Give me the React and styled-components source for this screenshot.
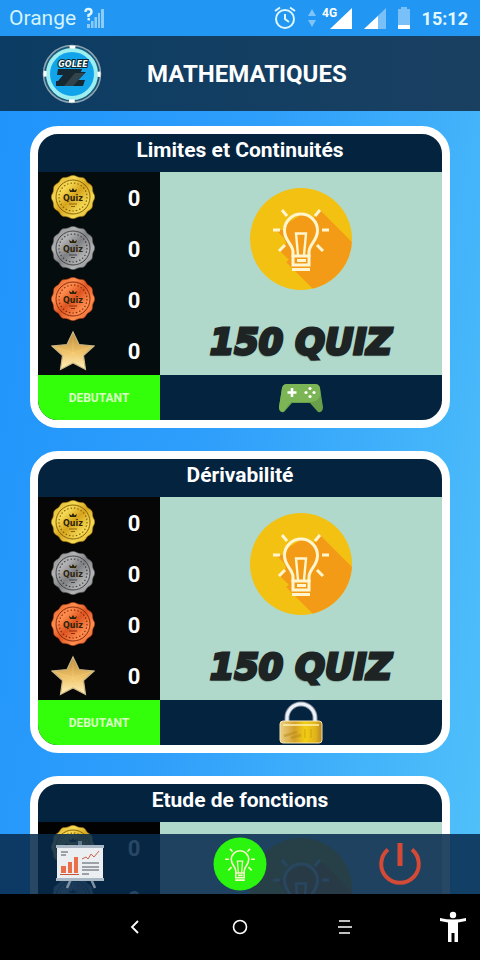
import React from 'react';
import styled, { createGlobalStyle } from 'styled-components'

const GlobalStyle = createGlobalStyle`
  * {
    box-sizing: border-box;
  }

  body {
    margin: 0;
    font-family: Roboto, "Liberation Sans", sans-serif;
    color: #ffffff;
    background: #000000;
  }

  button {
    border: none;
    padding: 0;
    background: none;
    font: inherit;
    color: inherit;
    cursor: pointer;
  }

  h1, h2, p, ul {
    margin: 0;
    padding: 0;
  }

  svg {
    display: block;
  }
`;

const Main = styled.div`
  height: 100vh;
  display: flex;
  flex-direction: column;
  background: linear-gradient(100deg, #1e93fb 0%, #2f9ffb 45%, #52c2fa 100%);
`;

const StatusBar = styled.div`
  height: 36px;
  flex: none;
  display: flex;
  align-items: center;
  justify-content: space-between;
  padding: 0 12px 0 9px;
  background: #2196f3;
`;

const StatusGroup = styled.div`
  display: flex;
  align-items: center;
  gap: ${props => props.$gap};
`;

const Carrier = styled.span`
  font-size: 21px;
  line-height: 36px;
  color: #d3f3ff;
`;

const Clock = styled.span`
  font-size: 18px;
  font-weight: 700;
  color: #e2f8ff;
`;

const Header = styled.header`
  height: 75px;
  flex: none;
  display: grid;
  grid-template-columns: 147px 1fr;
  align-items: center;
  background: linear-gradient(90deg, #0c3c63, #1a4061);

  svg {
    margin-left: 42px;
  }

  h1 {
    font-size: 24px;
    line-height: 32px;
    font-weight: 700;
  }
`;

const Content = styled.div`
  position: relative;
  flex: 1;
  min-height: 0;
`;

const List = styled.main`
  height: 100%;
  overflow-y: auto;
  scrollbar-width: none;
  display: flex;
  flex-direction: column;
  gap: 23px;
  padding: 15px 30px 76px;
`;

const Card = styled.section`
  flex: none;
  border: 8px solid #ffffff;
  border-radius: 28px;
  overflow: hidden;
  background: #03233f;

  h2 {
    height: 38px;
    font-size: 21px;
    line-height: 32px;
    font-weight: 700;
    text-align: center;
  }
`;

const CardBody = styled.div`
  height: 203px;
  display: grid;
  grid-template-columns: 122px 1fr;
`;

const Scores = styled.ul`
  list-style: none;
  display: flex;
  flex-direction: column;
  background: ${props => props.$background};
`;

const Score = styled.li`
  flex: 1;
  display: grid;
  grid-template-columns: 70px 52px;
  align-items: center;
  justify-items: center;
  font-size: 22px;
  line-height: 24px;
  font-weight: 700;

  span {
    padding-top: 4px;
  }
`;

const Preview = styled.div`
  display: flex;
  flex-direction: column;
  align-items: center;
  gap: 30px;
  padding-top: 16px;
  background: #b0d9cc;
`;

const QuizCount = styled.p`
  font-family: "DejaVu Sans", sans-serif;
  font-size: 35px;
  line-height: 44px;
  font-weight: 700;
  font-style: italic;
  white-space: nowrap;
  color: #1d2423;
  -webkit-text-stroke: 3px #1d2423;
  text-shadow: -1px 2px 1px #5e7a72;
`;

const CardFooter = styled.div`
  height: 45px;
  display: grid;
  grid-template-columns: 122px 1fr;
`;

const Level = styled.button`
  && {
    background: #33ff0a;
    color: #d9ffc4;
    font-size: 12px;
    font-weight: 700;
  }
`;

const PlayButton = styled.button`
  display: flex;
  align-items: center;
  justify-content: center;
`;

const TabBar = styled.nav`
  position: absolute;
  left: 0;
  right: 0;
  bottom: 0;
  height: 60px;
  display: grid;
  grid-template-columns: repeat(3, 1fr);
  background: rgba(8, 44, 78, 0.87);

  button {
    display: flex;
    align-items: center;
    justify-content: center;
  }
`;

const SystemNav = styled.nav`
  height: 66px;
  flex: none;
  display: grid;
  grid-template-columns: 1fr repeat(3, 105px) 1fr;
  background: #000000;

  button {
    display: flex;
    align-items: center;
    justify-content: center;
  }

  button:first-child {
    grid-column: 2;
  }

  button:last-child {
    justify-content: flex-end;
    padding-right: 13px;
  }
`;

const medals = {
  gold: ['#f5da55', '#d6a41c', '#8a6208'],
  silver: ['#b4b4b6', '#7f8083', '#434447'],
  bronze: ['#ff8e50', '#dd5420', '#8a2c0a'],
};

// scalloped edge of a medal, 12 bumps round a 44px square
const medalEdge = (() => {
  let d = '';
  for (let i = 0; i < 96; i++) {
    const a = (i / 96) * Math.PI * 2;
    const r = 21.2 + Math.cos(a * 12) * 0.6;
    d += `${i ? 'L' : 'M'}${(22 + r * Math.cos(a)).toFixed(2)} ${(22 + r * Math.sin(a)).toFixed(2)}`;
  }
  return d + 'Z';
})();

function Medal({ kind }) {
  const [light, mid, dark] = medals[kind];
  return (
    <svg width='44' height='44' viewBox='0 0 44 44'>
      <defs>
        <linearGradient id={`medal-${kind}`} x1='0' y1='0' x2='1' y2='1'>
          <stop offset='0' stopColor={mid} />
          <stop offset='0.3' stopColor={light} />
          <stop offset='0.5' stopColor={mid} />
          <stop offset='0.72' stopColor={light} />
          <stop offset='1' stopColor={mid} />
        </linearGradient>
      </defs>
      <path d={medalEdge} fill={`url(#medal-${kind})`} stroke={dark} strokeWidth='0.6' />
      <circle cx='22' cy='22' r='17' fill='none' stroke={dark} strokeWidth='1' />
      <circle cx='22' cy='22' r='14' fill='none' stroke={dark} strokeWidth='1.2' strokeDasharray='1.5 2' />
      <path d='M19 17l-1-3 2.5 1.500L22 13l1.500 2.500L26 14l-1 3z' fill='#2e2408' />
      <path d='M18 29h8M20 31.500h4' stroke={dark} strokeWidth='1.200' />
      <text x='22' y='25.500' textAnchor='middle' fontSize='8' fontWeight='700' fontFamily='"DejaVu Sans", sans-serif' fill='#2e2408'>Quiz</text>
    </svg>
  );
}

function Star() {
  return (
    <svg width='44' height='44' viewBox='0 0 44 44'>
      <defs>
        <linearGradient id='star' x1='0' y1='0' x2='0' y2='1'>
          <stop offset='0' stopColor='#b98737' />
          <stop offset='0.55' stopColor='#f0c46a' />
          <stop offset='1' stopColor='#fff0bd' />
        </linearGradient>
      </defs>
      <path d='M22 4L28 16.500L43 18L32.500 27.500 34.500 41.500 22 35 9.500 41.500 11.500 27.500 1 18L16 16.500Z' fill='url(#star)' stroke='#c9b584' strokeWidth='1.200' />
      <path d='M22 4V25M43 18L22 25M34.500 41L22 25M9.500 41L22 25M1 18L22 25' stroke='#fbe2a0' strokeWidth='0.5' opacity='0.5' />
    </svg>
  );
}

function BulbLines() {
  return (
    <g fill='none' stroke='#fff6cf' strokeWidth='3'>
      <path d='M43 69V64C43 56 34.500 53 34.500 42.500A16.500 16.500 0 0 1 67.500 42.500C67.500 53 59 56 59 64V69' />
      <path d='M43 68H59V77H43ZM47 72.500H56M42 81.500H60' />
      <path d='M48 67L46 45.500H56L54 67M45 45.500H57' strokeWidth='2.400' />
      <path d='M32 22L37 28M70 22L65 28M23 42H30M79 42H72M29 63L35 57M73 63L67 57' />
    </g>
  );
}

function BulbBadge() {
  return (
    <svg width='102' height='102' viewBox='0 0 102 102'>
      <defs>
        <clipPath id='badge'><circle cx='51' cy='51' r='51' /></clipPath>
      </defs>
      <circle cx='51' cy='51' r='51' fill='#f2c112' />
      <path d='M70 22L112 64V112H74L36 74 42 70 35 52 36 36 51 27 64 30Z' fill='#f39b16' clipPath='url(#badge)' />
      <path d='M26 42L34 50 36 55 30 63 43 76V64L34 46V42Z' fill='#f39b16' />
      <BulbLines />
    </svg>
  );
}

function Gamepad() {
  return (
    <svg width='46' height='32' viewBox='0 0 46 32'>
      <path d='M9 2H37Q41 2 42 6L45 25Q45 31 40 30L32 21H14L6 30Q1 31 1 25L4 6Q5 2 9 2Z' fill='#689f48' />
      <path d='M9 2H37Q41 2 42 6L42.500 13Q40 20 33 20H13L5 30Q1 30 1 25L4 6Q5 2 9 2Z' fill='#7cb555' />
      <path d='M14 6V15M9.500 10.500H18.500' stroke='#ffffff' strokeWidth='2.600' />
      <g fill='#ffffff'>
        <circle cx='32' cy='6.500' r='1.600' />
        <circle cx='32' cy='14.500' r='1.600' />
        <circle cx='28' cy='10.500' r='1.600' />
        <circle cx='36' cy='10.500' r='1.600' />
      </g>
    </svg>
  );
}

function Padlock() {
  return (
    <svg width='44' height='44' viewBox='0 0 44 44'>
      <defs>
        <linearGradient id='lock' x1='0' y1='0' x2='1' y2='0'>
          <stop offset='0' stopColor='#e9cf86' />
          <stop offset='0.35' stopColor='#d3a02a' />
          <stop offset='0.6' stopColor='#f3cf12' />
          <stop offset='0.85' stopColor='#e0b31c' />
          <stop offset='1' stopColor='#b68727' />
        </linearGradient>
      </defs>
      <path d='M8 23V17A14 14 0 0 1 36 17V23' fill='none' stroke='#8b93a0' strokeWidth='5' />
      <path d='M8 23V17A14 14 0 0 1 36 17V23' fill='none' stroke='#eef3fa' strokeWidth='3' />
      <rect x='1' y='20' width='42' height='22' rx='3' fill='url(#lock)' stroke='#f4e3b0' />
      <path d='M4 24H40' stroke='#fff0b0' strokeWidth='1.500' />
      <path d='M5 35L18 31M12 37L22 34' stroke='#b98a18' strokeWidth='2.500' opacity='0.5' />
      <path d='M26 28V37M32 28V37' stroke='#c99a10' strokeWidth='2' opacity='0.4' />
    </svg>
  );
}

function Logo() {
  return (
    <svg width='60' height='60' viewBox='0 0 60 60'>
      <circle cx='30' cy='30' r='28.500' fill='#1b5a78' stroke='#8fa5b3' strokeWidth='1.500' />
      <circle cx='30' cy='30' r='24' fill='#12a4ea' stroke='#9deef0' strokeWidth='4' />
      <circle cx='30' cy='30' r='27' fill='none' stroke='#ffffff' strokeWidth='3' strokeDasharray='6 36.410' strokeDashoffset='3' />
      <text x='31' y='23' textAnchor='middle' fontSize='8' fontWeight='700' fontStyle='italic' fill='#f4ffff' stroke='#0a2530' strokeWidth='2' paintOrder='stroke' fontFamily='"DejaVu Sans", sans-serif'>GOLEE</text>
      <path d='M16 25H40L39 28H44L36 36H43L41 42H14V37H16L21 31H15Z' fill='#162832' />
      <path d='M33 29H43L31 42H22Z' fill='#33434b' />
    </svg>
  );
}

function ChartBoard() {
  return (
    <svg width='50' height='50' viewBox='0 0 50 50'>
      <path d='M16 40L12 49M36 40L40 49' stroke='#7f93a3' strokeWidth='2.500' />
      <rect x='23' y='2' width='4' height='6' fill='#5e788c' />
      <rect x='2' y='8' width='46' height='33' fill='#eceff1' />
      <rect x='1' y='6' width='48' height='3' fill='#a9b8c4' />
      <rect x='1' y='39' width='48' height='3' fill='#a9b8c4' />
      <path d='M6 13H13M6 16H11M27 24H44M27 28H44M27 31H44M27 35H34' stroke='#4c5560' />
      <path d='M6 27H11V34H6ZM13 23H17V34H13ZM19 18H23V34H19Z' fill='#e86f4a' />
      <path d='M5 35.500H24' stroke='#c9553a' />
      <path d='M27 20L31 18 33 20 36 15 39 18 44 12' fill='none' stroke='#d0604a' />
    </svg>
  );
}

function QuizTab() {
  return (
    <svg width='54' height='54' viewBox='0 0 102 102'>
      <circle cx='51' cy='51' r='50' fill='#2bf50f' />
      <BulbLines />
    </svg>
  );
}

function Power() {
  return (
    <svg width='44' height='44' viewBox='0 0 44 44' fill='none' stroke='#d44a36' strokeWidth='4'>
      <path d='M10 7.500A18.800 18.800 0 1 0 34 7.500' />
      <path d='M22 1V24' strokeWidth='5' />
    </svg>
  );
}

const chapters = [
  { title: 'Limites et Continuités', unlocked: true, background: '#040c0e' },
  { title: 'Dérivabilité', unlocked: false, background: '#060607' },
  { title: 'Etude de fonctions', unlocked: false, background: '#020203' },
];

function Chapter({ title, unlocked, background }) {
  return (
    <Card>
      <h2>{title}</h2>
      <CardBody>
        <Scores $background={background}>
          <Score><Medal kind='gold' /><span>0</span></Score>
          <Score><Medal kind='silver' /><span>0</span></Score>
          <Score><Medal kind='bronze' /><span>0</span></Score>
          <Score><Star /><span>0</span></Score>
        </Scores>
        <Preview>
          <BulbBadge />
          <QuizCount>150 QUIZ</QuizCount>
        </Preview>
      </CardBody>
      <CardFooter>
        <Level type='button'>DEBUTANT</Level>
        <PlayButton type='button' aria-label={unlocked ? 'Jouer' : 'Verrouillé'}>
          {unlocked ? <Gamepad /> : <Padlock />}
        </PlayButton>
      </CardFooter>
    </Card>
  );
}

function App() {
  return (
    <Main>
      <GlobalStyle />
      <StatusBar>
        <StatusGroup $gap='8px'>
          <Carrier>Orange</Carrier>
          <svg width='20' height='22' viewBox='0 0 20 22'>
            <path d='M3 21V17H6V21ZM7 21V14H9.500V21ZM10.500 21V10H13V21ZM14 21V6H16V21ZM17 21V2H20V21Z' fill='#8ccbf5' />
            <path d='M1.500 5Q1.500 2 4.500 2T7.500 5Q7.500 7 4.500 8V10' fill='none' stroke='#e0f7ff' strokeWidth='2.400' />
            <rect x='3.500' y='11' width='2.400' height='2.400' fill='#e0f7ff' />
          </svg>
        </StatusGroup>
        <StatusGroup $gap='12px'>
          <svg width='22' height='24' viewBox='0 0 22 24' fill='none' stroke='#e0f7ff' strokeWidth='2'>
            <circle cx='11' cy='13' r='9' />
            <path d='M11 8V13L15 16M1 5L6 1.500M21 5L16 1.500' />
          </svg>
          <StatusGroup $gap='6px'>
            <svg width='8' height='20' viewBox='0 0 8 20' fill='#7fc4f8'>
              <path d='M4 1L8 8H0ZM4 19L8 12H0Z' />
            </svg>
            <svg width='30' height='24' viewBox='0 0 30 24' fill='#ffffff'>
              <path d='M30 2V23H8Z' />
              <text x='0' y='11' fontSize='12' fontWeight='700' fontFamily='Roboto, sans-serif' stroke='#2196f3' strokeWidth='2' paintOrder='stroke'>4G</text>
            </svg>
          </StatusGroup>
          <svg width='22' height='24' viewBox='0 0 22 24'>
            <path d='M22 2V23H0Z' fill='#79bff8' />
            <path d='M14 10V23H0Z' fill='#ffffff' />
          </svg>
          <svg width='12' height='24' viewBox='0 0 12 24'>
            <path d='M3 1H9V3H12V23H0V3H3Z' fill='#79bff8' />
            <path d='M0 19H12V23H0Z' fill='#ffffff' />
          </svg>
          <Clock>15:12</Clock>
        </StatusGroup>
      </StatusBar>
      <Header>
        <Logo />
        <h1>MATHEMATIQUES</h1>
      </Header>
      <Content>
        <List>
          {chapters.map(chapter => <Chapter key={chapter.title} {...chapter} />)}
        </List>
        <TabBar>
          <button type='button' aria-label='Statistiques'><ChartBoard /></button>
          <button type='button' aria-label='Quiz'><QuizTab /></button>
          <button type='button' aria-label='Quitter'><Power /></button>
        </TabBar>
      </Content>
      <SystemNav>
        <button type='button' aria-label='Retour'>
          <svg width='14' height='14' viewBox='0 0 14 14' fill='none' stroke='#ffffff' strokeWidth='1.800'>
            <path d='M10 1L4 7L10 13' />
          </svg>
        </button>
        <button type='button' aria-label='Accueil'>
          <svg width='16' height='16' viewBox='0 0 16 16' fill='none' stroke='#ffffff' strokeWidth='1.600'>
            <circle cx='8' cy='8' r='6.500' />
          </svg>
        </button>
        <button type='button' aria-label='Menu'>
          <svg width='16' height='14' viewBox='0 0 16 14' stroke='#ffffff' strokeWidth='1.600'>
            <path d='M2 1H13M1 7H15M2 13H13' />
          </svg>
        </button>
        <button type='button' aria-label='Accessibilité'>
          <svg width='28' height='32' viewBox='0 0 28 32' fill='#ffffff'>
            <circle cx='14' cy='4' r='3.200' />
            <path d='M1 7Q14 10 27 7V10L19 11.500V31H15.500V22H12.500V31H9V11.500L1 10Z' />
          </svg>
        </button>
      </SystemNav>
    </Main>
  );
}

export default App;
